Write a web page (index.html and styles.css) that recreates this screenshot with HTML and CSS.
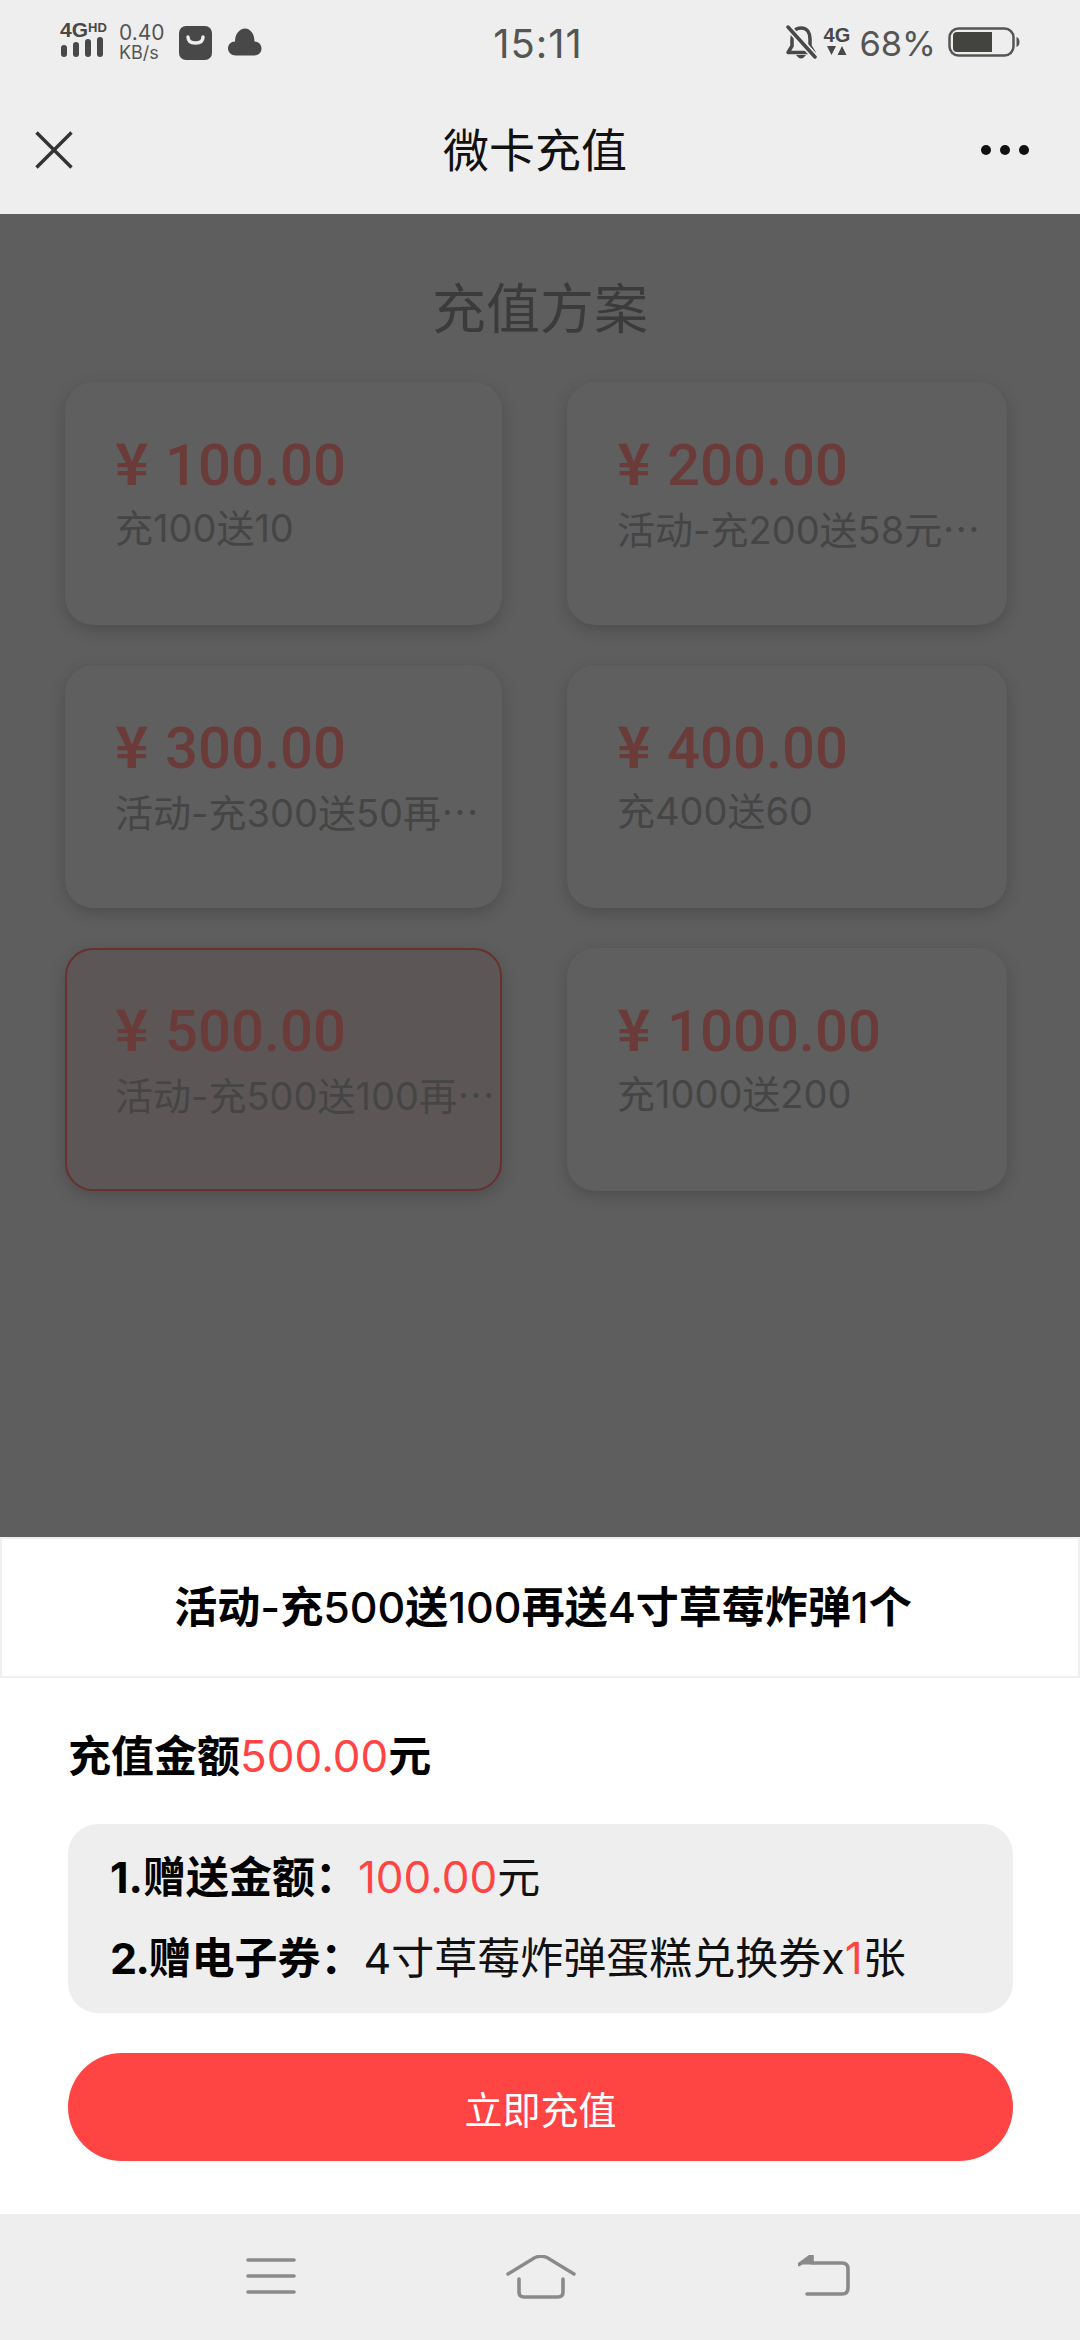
FILE: index.html
```html
<!DOCTYPE html>
<html lang="zh-CN">
<head>
<meta charset="utf-8">
<title>微卡充值</title>
<link rel="stylesheet" href="styles.css">
</head>
<body>
<div class="page">
  <header class="top">
    <div class="status">
      <div class="status-left">
        <div class="net">
          <div class="net-label"><span class="net-4g">4G</span><span class="net-hd">HD</span></div>
          <svg class="signal" viewBox="0 0 44 20"><rect x="1" y="8" width="6" height="12" rx="3"/><rect x="13" y="5" width="6" height="15" rx="3"/><rect x="25" y="2" width="6" height="18" rx="3"/><rect x="37" y="0" width="6" height="20" rx="3"/></svg>
        </div>
        <div class="speed"><span class="speed-num">0.40</span><span class="speed-unit">KB/s</span></div>
        <svg class="bag" viewBox="0 0 33 34"><rect width="33" height="34" rx="7" fill="#484848"/><path d="M9 11 Q9 17 16.500 17 Q24 17 24 11" fill="none" stroke="#eee" stroke-width="3.400" stroke-linecap="round"/></svg>
        <svg class="cloud" viewBox="0 0 34 28"><path d="M8 27.500 C3 27.500 0 24 0 20.500 C0 16.500 3 13.500 7 13.500 C7 6 11.500 0.500 17 0.500 C22.500 0.500 26.500 6 26.500 13.500 C30.500 13.500 33.500 16.500 33.500 20.500 C33.500 24.500 30.500 27.500 26 27.500 Z" fill="#484848"/></svg>
      </div>
      <div class="clock">15:11</div>
      <div class="status-right">
        <svg class="bell" viewBox="0 0 32 36"><path d="M16 3 C9.500 3 7 8 7 14 V21 L3 27.500 H29 L25 21 V14 C25 8 22.500 3 16 3 Z" fill="none" stroke="#484848" stroke-width="3.500" stroke-linejoin="round"/><path d="M11 30 Q16 37 21 30 Z" fill="#484848"/><path d="M3 2 L30 32" stroke="#eee" stroke-width="7"/><path d="M3 2 L30 32" stroke="#484848" stroke-width="3.500" stroke-linecap="round"/></svg>
        <div class="data">
          <span class="data-4g">4G</span>
          <svg class="arrows" viewBox="0 0 20 9"><path d="M0 0 H9 L4.500 9 Z M10.500 9 H19.500 L15 0 Z" fill="#484848"/></svg>
        </div>
        <span class="percent">68%</span>
        <svg class="battery" viewBox="0 0 72 30"><rect x="1.500" y="1.500" width="64" height="27" rx="9" fill="none" stroke="#555" stroke-width="2.500"/><path d="M5 9 Q5 5 9 5 H44 V25 H9 Q5 25 5 21 Z" fill="#43443f"/><path d="M68.500 10 Q71.500 11 71.500 15 Q71.500 19 68.500 20 Z" fill="#555"/></svg>
      </div>
    </div>
    <div class="titlebar">
      <svg class="close" viewBox="0 0 38 38"><path d="M1.500 1.500 L36.500 36.500 M36.500 1.500 L1.500 36.500" stroke="#333" stroke-width="3.400" fill="none"/></svg>
      <h1 class="app-title">微卡充值</h1>
      <div class="more"><i></i><i></i><i></i></div>
    </div>
  </header>

  <main class="plans">
    <h2 class="plans-title">充值方案</h2>
    <div class="grid">
      <div class="card"><div class="price"><span class="yen">¥</span>100.00</div><div class="desc">充100送10</div></div>
      <div class="card"><div class="price"><span class="yen">¥</span>200.00</div><div class="desc">活动-充200送58元<span class="dots">…</span></div></div>
      <div class="card"><div class="price"><span class="yen">¥</span>300.00</div><div class="desc">活动-充300送50再<span class="dots">…</span></div></div>
      <div class="card"><div class="price"><span class="yen">¥</span>400.00</div><div class="desc">充400送60</div></div>
      <div class="card selected"><div class="price"><span class="yen">¥</span>500.00</div><div class="desc">活动-充500送100再<span class="dots">…</span></div></div>
      <div class="card"><div class="price"><span class="yen">¥</span>1000.00</div><div class="desc">充1000送200</div></div>
    </div>
  </main>

  <section class="sheet">
    <div class="sheet-title"><span>活动<span class="num">-</span>充<span class="num">500</span>送<span class="num">100</span>再送<span class="num">4</span>寸草莓炸弹<span class="num">1</span>个</span></div>
    <div class="sheet-body">
      <div class="amount">充值金额<span class="red">500.00</span>元</div>
      <div class="info">
        <div class="info-row"><b>1.赠送金额：</b><span class="red">100.00</span>元</div>
        <div class="info-row"><b><span class="tight">2.</span>赠电子券：</b>4寸草莓炸弹蛋糕兑换券x<span class="red">1</span>张</div>
      </div>
      <button class="pay">立即充值</button>
    </div>
  </section>

  <nav class="navbar">
    <svg class="nav-menu" viewBox="0 0 50 38"><path d="M2 3 H48 M2 19 H48 M2 35 H48" stroke="#8a8a8a" stroke-width="3.600" stroke-linecap="round" fill="none"/></svg>
    <svg class="nav-home" viewBox="0 0 70 44"><path d="M2 19 L29 2.500 Q35 0 41 2.500 L68 19" stroke="#8a8a8a" stroke-width="3.400" stroke-linecap="round" fill="none"/><path d="M13 24 V37 Q13 42 18 42 H52 Q57 42 57 37 V24" stroke="#8a8a8a" stroke-width="3.600" stroke-linecap="round" fill="none"/></svg>
    <svg class="nav-back" viewBox="0 0 52 42"><path d="M1 9.500 L14 0 V8 H44 Q50 8 50 14 V33 Q50 39 44 39 H9" stroke="#8a8a8a" stroke-width="3.600" stroke-linecap="round" stroke-linejoin="round" fill="none"/><path d="M1 9.500 L14 0 V9.500 Z" fill="#8a8a8a"/></svg>
  </nav>
</div>
</body>
</html>
```
FILE: styles.css
```css
* { box-sizing: border-box; margin: 0; padding: 0; }
html, body { width: 1080px; height: 2340px; overflow: hidden; }
body {
  font-family: Inter, "Noto Sans CJK SC", sans-serif;
  background: #5e5e5e;
}
.page { width: 1080px; height: 2340px; display: flex; flex-direction: column; }

/* top */
.top { height: 214px; background: #eeeeee; flex: none; }
.status {
  height: 88px;
  padding: 22px 60px 0 60px;
  display: grid;
  grid-template-columns: 1fr auto 1fr;
  align-items: start;
  color: #484848;
}
.status-left { display: flex; align-items: flex-start; }
.net { width: 46px; display: flex; flex-direction: column; }
.net-label { display: flex; align-items: flex-start; height: 15px; line-height: 15px; font-family: "Liberation Sans", sans-serif; font-weight: 700; }
.net-4g { font-size: 21px; }
.net-hd { font-size: 13px; line-height: 11px; }
.signal { width: 44px; height: 20px; fill: #484848; display: block; }
.speed { margin-left: 13px; display: flex; flex-direction: column; }
.speed-num { font-size: 21px; line-height: 22px; color: #555; }
.speed-unit { font-size: 18px; line-height: 17px; color: #555; }
.bag { width: 33px; height: 34px; margin-left: 14px; margin-top: 4px; }
.cloud { width: 34px; height: 28px; margin-left: 16px; margin-top: 6px; }
.clock { font-size: 40px; line-height: 44px; color: #555; letter-spacing: 1px; margin-left: -4px; }
.status-right { display: flex; justify-content: flex-end; align-items: flex-start; }
.bell { width: 32px; height: 36px; margin-top: 3px; }
.data { margin-left: 7px; width: 25px; display: flex; flex-direction: column; align-items: center; margin-top: 4px; }
.data-4g { font-family: "Liberation Sans", sans-serif; font-weight: 700; font-size: 20px; line-height: 18px; color: #484848; }
.arrows { width: 20px; height: 9px; margin-top: 2px; display: block; }
.percent { margin-left: 10px; font-size: 34.500px; line-height: 44px; color: #555; }
.battery { width: 72px; height: 30px; margin-left: 12px; margin-top: 5px; }

.titlebar {
  height: 126px;
  padding: 0 51px 2px 35px;
  display: flex;
  align-items: center;
  justify-content: space-between;
}
.close { width: 38px; height: 38px; }
.app-title { font-size: 46px; line-height: 60px; font-weight: 400; color: #111; margin-left: 16px; }
.more { display: flex; gap: 9px; }
.more i { width: 10px; height: 10px; border-radius: 50%; background: #111; display: block; }

/* plans */
.plans { flex: 1; padding: 0 65px; }
.plans-title { text-align: center; font-size: 54px; line-height: 72px; font-weight: 400; color: #3b3b3b; margin-top: 60px; }
.grid { margin-top: 36px; display: grid; grid-template-columns: 437px 440px; column-gap: 65px; row-gap: 40px; }
.card {
  height: 243px;
  border-radius: 28px;
  background: #5f5f5f;
  box-shadow: 0 5px 16px rgba(0,0,0,.18);
  padding: 43px 0 0 50px;
}
.price { font-family: Roboto, sans-serif; font-size: 58px; line-height: 70px; font-weight: 500; color: #6b3b3a; white-space: nowrap; }
.yen { display: inline-block; width: 50px; font-family: "Noto Sans CJK SC", sans-serif; font-weight: 700; font-size: 57px; }
.desc { font-size: 38px; line-height: 48px; color: #454545; white-space: nowrap; margin-top: 4px; }
.dots { font-family: "Noto Sans CJK SC", sans-serif; }
.selected {
  background: #5c5756;
  border: 2px solid #6a302d;
  padding: 41px 0 0 48px;
}

/* sheet */
.sheet { flex: none; height: 677px; background: #fff; border-top: 2px solid #f0f0f0; }
.sheet-title {
  height: 139px;
  border: 2px solid #f0f0f0;
  border-top: none;
  display: flex;
  align-items: center;
  justify-content: center;
  font-size: 43px;
  font-weight: 700;
  color: #000;
  padding: 0 0 7px 6px;
}
.num { font-weight: 500; }
.sheet-body { padding: 49px 67px 0 68px; }
.amount { font-size: 43px; line-height: 58px; font-weight: 700; color: #000; }
.amount .red { font-weight: 400; font-size: 44px; }
.red { color: #ff4444; }
.info {
  margin-top: 39px;
  height: 189px;
  background: #eeeeee;
  border-radius: 30px;
  padding: 24px 0 0 42px;
  font-size: 43px;
  color: #111;
}
.info-row { line-height: 58px; height: 81px; white-space: nowrap; }
.info-row b { font-weight: 700; color: #000; }
.info-row .red { font-size: 44px; }
.tight { letter-spacing: -1.500px; }
.pay {
  display: block;
  width: 100%;
  height: 108px;
  margin-top: 40px;
  border: none;
  border-radius: 54px;
  background: #ff4444;
  color: #fff;
  font-family: inherit;
  font-size: 38px;
}

/* navbar */
.navbar {
  flex: none;
  height: 126px;
  background: #eeeeee;
  display: flex;
  align-items: flex-start;
  padding: 43px 0 0 246px;
}
.nav-menu { width: 50px; height: 38px; }
.nav-home { width: 70px; height: 44px; margin-left: 210px; margin-top: -2px; }
.nav-back { width: 52px; height: 42px; margin-left: 222px; margin-top: -2px; }
```
